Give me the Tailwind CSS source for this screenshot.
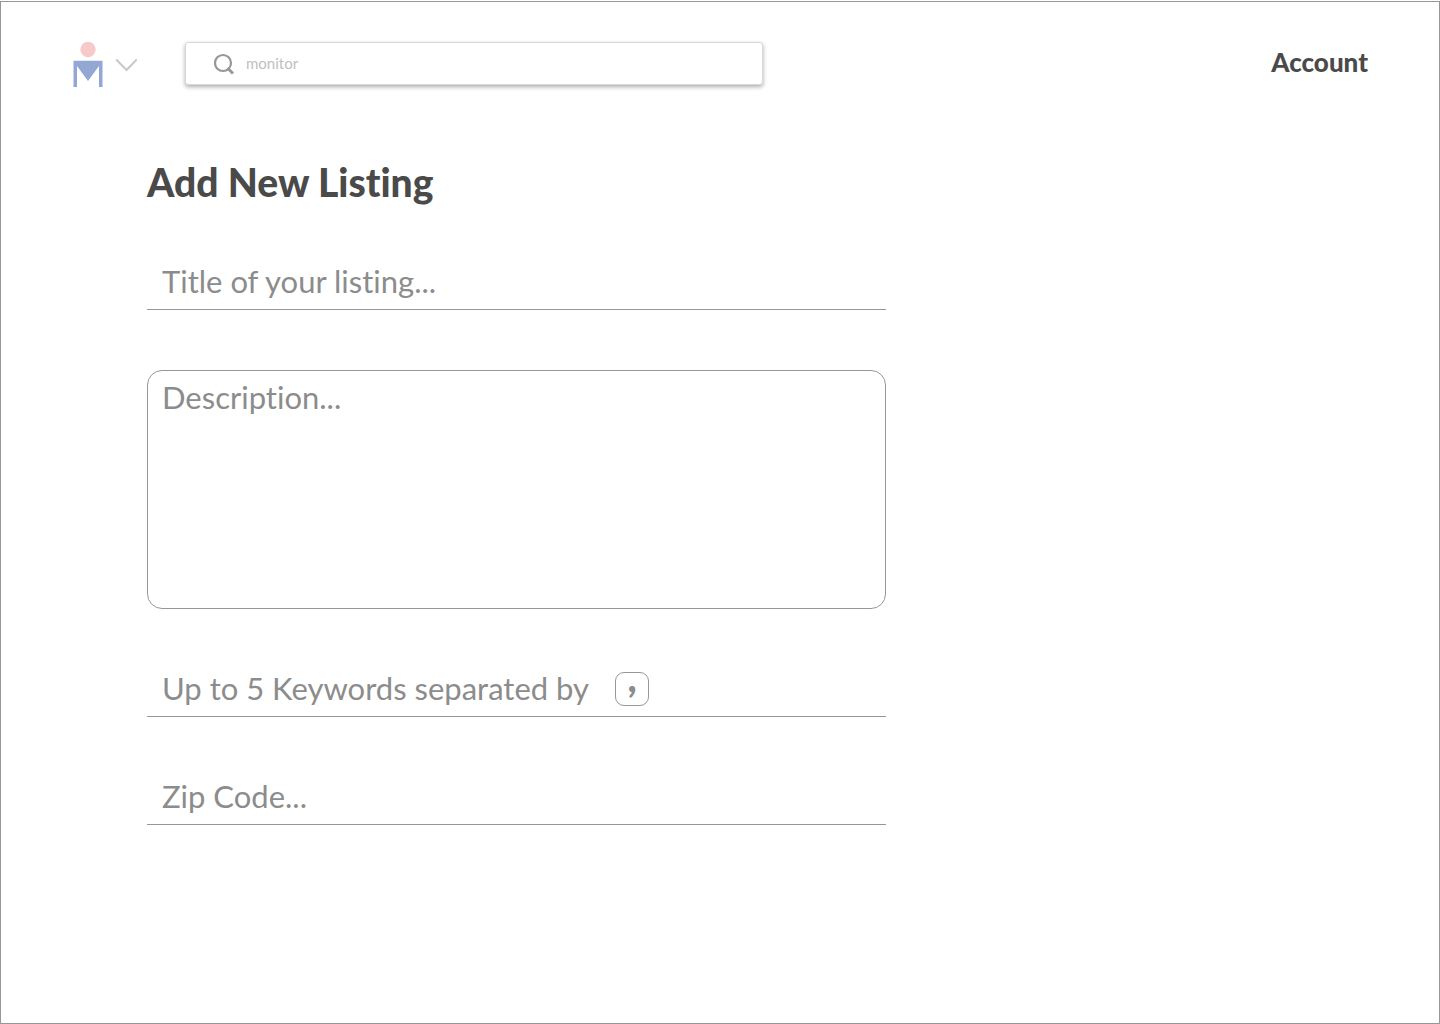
<!DOCTYPE html>
<html lang="en">
<head>
<meta charset="utf-8">
<meta name="viewport" content="width=device-width, initial-scale=1">
<title>Add New Listing</title>
<script src="https://cdn.jsdelivr.net/npm/@tailwindcss/browser@4"></script>
</head>
<body class="flex min-h-screen flex-col bg-white pt-px font-['Lato',sans-serif] text-[#4a4a4a] [font-variant-ligatures:none]">
<div class="flex-1 border border-[#979797]">
  <header class="flex items-start justify-between pt-10 pr-[71px] pl-[72px]">
    <div class="flex flex-1 items-start">
      <button type="button" aria-label="Open menu" class="flex items-center gap-3">
        <svg class="h-[46px] w-[30px]" viewBox="0 0 30 46" aria-hidden="true">
          <circle cx="15" cy="7.500" r="7.700" fill="#f8c9cb"/>
          <path d="M.5 18.700h29v26.300h-3.500V24L15 39 4 24v21H.5z" fill="#93a7d4"/>
        </svg>
        <svg class="h-[14px] w-[22px]" viewBox="0 0 22 14" fill="none" stroke="#c8c8c8" stroke-width="2" aria-hidden="true"><path d="M1.200 1.500 11.500 12 21.800 1.500"/></svg>
      </button>
      <form role="search" class="ml-12 flex h-[43px] w-full max-w-[578px] items-center gap-3 rounded-[3px] border border-[#d8d8d8] bg-white pl-7 shadow-[0_2px_4px_rgba(0,0,0,0.32)]">
        <svg class="h-[22px] w-5 shrink-0" viewBox="0 0 20 22" fill="none" stroke="#979797" aria-hidden="true"><circle cx="9" cy="10" r="8" stroke-width="2.200"/><path d="m13.500 15 5.500 5.500" stroke-width="3"/></svg>
        <input type="text" aria-label="Search" placeholder="monitor" class="min-w-0 flex-1 text-[15px] outline-none placeholder:text-[#c0c0c0]">
      </form>
    </div>
    <a href="#" class="mt-1 text-[26px] leading-8 font-black">Account</a>
  </header>

  <main class="pt-[70px] pr-6 pl-[146px]">
    <form class="w-full max-w-[739px]">
      <h1 class="text-[39px] leading-12 font-black">Add New Listing</h1>
      <input type="text" aria-label="Title" placeholder="Title of your listing..." class="mt-12 block h-14 w-full border-b border-[#979797] px-[15px] pb-[2px] text-[31px] outline-none placeholder:text-[#8c8c8c]">
      <textarea aria-label="Description" placeholder="Description..." class="mt-[60px] block h-[239px] w-full resize-none rounded-[15px] border border-[#979797] px-[14px] py-2 text-[31px] leading-9 outline-none placeholder:text-[#8c8c8c]"></textarea>
      <div class="relative mt-[52px]">
        <input type="text" aria-label="Keywords" placeholder="Up to 5 Keywords separated by" class="block h-14 w-full border-b border-[#979797] px-[15px] pb-[2px] text-[31px] outline-none placeholder:text-[#8c8c8c]">
        <kbd class="pointer-events-none absolute top-[11px] left-[468px] flex size-[34px] items-center justify-center rounded-[9px] border border-[#979797] pb-6 font-['Lato',sans-serif] text-[39px] leading-none font-black text-[#8c8c8c]">,</kbd>
      </div>
      <input type="text" inputmode="numeric" aria-label="Zip code" placeholder="Zip Code..." class="mt-13 block h-14 w-full border-b border-[#979797] px-[15px] pb-[2px] text-[31px] outline-none placeholder:text-[#8c8c8c]">
    </form>
  </main>
</div>
</body>
</html>
